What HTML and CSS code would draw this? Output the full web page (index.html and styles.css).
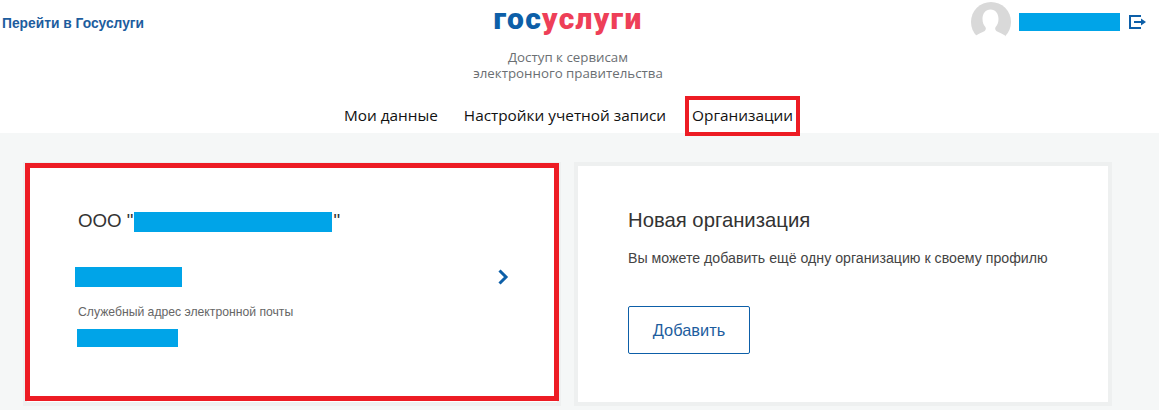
FILE: index.html
```html
<!DOCTYPE html>
<html lang="ru">
<head>
<meta charset="utf-8">
<title>Госуслуги — Организации</title>
<link rel="stylesheet" href="styles.css">
</head>
<body>
<header class="header">
  <div class="top">
    <a class="back" href="#">Перейти в Госуслуги</a>
    <div class="brand">
      <div class="logo"><span class="logo-a">гос</span><span class="logo-b">услуги</span></div>
      <p class="tagline">Доступ к сервисам<br>электронного правительства</p>
    </div>
    <div class="user">
      <svg class="avatar" viewBox="0 0 40 40" width="40" height="40">
        <circle cx="20" cy="20" r="20" fill="#d9d9d9"/>
        <path d="M19.500 7.500c-5 0-8 4-8 9.500 0 3 1 6 2.800 8 .9 1 .7 3-.6 4-2.200 1.500-6 2.500-8.700 4.500V42h29V33.500c-2.700-2-6.500-3-8.700-4.500-1.300-1-1.500-3-.6-4 1.800-2 2.800-5 2.800-8 0-5.500-3-9.500-8-9.500z" fill="#fff"/>
      </svg>
      <span class="mask mask-user"></span>
      <svg class="exit" viewBox="0 0 17 14" width="17" height="14">
        <path d="M12 1H1v12h11" fill="none" stroke="#0d5fa8" stroke-width="2"/>
        <path d="M5 7h8" fill="none" stroke="#0d5fa8" stroke-width="2"/>
        <path d="M12 3.500L17 7l-5 3.500z" fill="#0d5fa8"/>
      </svg>
    </div>
  </div>
  <nav class="nav">
    <a class="tab" href="#">Мои данные</a>
    <a class="tab" href="#">Настройки учетной записи</a>
    <a class="tab tab-active" href="#">Организации</a>
  </nav>
</header>
<main class="main">
  <section class="card card-org">
    <h2 class="org-title">ООО "<span class="mask mask-org"></span>"</h2>
    <div class="org-row">
      <div class="org-info">
        <span class="mask mask-name"></span>
        <p class="label">Служебный адрес электронной почты</p>
        <span class="mask mask-mail"></span>
      </div>
      <svg class="chevron" viewBox="0 0 12 16" width="12" height="16">
        <path d="M2.500 1.500L9 8l-6.500 6.500" fill="none" stroke="#0d5fa8" stroke-width="3"/>
      </svg>
    </div>
  </section>
  <section class="card card-new">
    <h2 class="new-title">Новая организация</h2>
    <p class="new-text">Вы можете добавить ещё одну организацию к своему профилю</p>
    <a class="btn" href="#">Добавить</a>
  </section>
</main>
</body>
</html>
```

FILE: styles.css
```css
* { box-sizing: border-box; }
html, body { margin: 0; height: 100%; }
body {
  background: #f5f7f7;
  font-family: "Liberation Sans", Arial, sans-serif;
  overflow: hidden;
}
a { text-decoration: none; }
.header { background: #fff; height: 133px; }
.top {
  display: grid;
  grid-template-columns: 418px 300px 1fr;
  height: 96px;
}
.back {
  margin: 16px 0 0 2px;
  font-size: 13.8px;
  font-weight: 700;
  line-height: 15px;
  color: #1d5d9e;
}
.brand { text-align: center; }
.logo {
  font-family: Roboto, sans-serif;
  font-weight: 900;
  font-size: 30px;
  letter-spacing: 1.3px;
  line-height: 34px;
  height: 44px;
  margin-top: 2px;
}
.logo-a { color: #0d5fa8; }
.logo-b { color: #ee3f58; }
.tagline {
  margin: 3px 0 0;
  font-family: "Open Sans", sans-serif;
  font-size: 13.3px;
  line-height: 16px;
  color: #6b6f73;
}
.user {
  display: flex;
  align-items: flex-start;
  justify-content: flex-end;
  padding: 2px 13px 0 0;
}
.avatar { flex: none; margin-right: 8px; }
.mask { display: inline-block; background: #00a4e8; }
.mask-user { width: 101px; height: 18px; margin-top: 11px; margin-right: 9px; }
.exit { margin-top: 13px; }
.nav {
  display: flex;
  justify-content: center;
  align-items: stretch;
  height: 40px;
  font-family: "Open Sans", sans-serif;
  font-size: 15.35px;
  padding-right: 22px;
}
.tab {
  display: flex;
  align-items: center;
  color: #111;
  padding: 0 3px 2px;
  margin-right: 12px;
  border: 4px solid transparent;
}
.tab-active { border-color: #ed1c24; margin-right: 0; }
.main {
  display: grid;
  grid-template-columns: 538px 538px;
  column-gap: 13px;
  padding: 29px 0 0 23px;
}
.card {
  position: relative;
  background: #fff;
  border: 4px solid #eef0f0;
  height: 244px;
}
.card-org { padding: 44px 48px 0 51px; }
.card-org::after {
  content: "";
  position: absolute;
  top: -3px;
  left: -2px;
  right: -2px;
  bottom: 1px;
  border: 5px solid #ed1c24;
}
.org-title {
  margin: 0;
  font-size: 18.7px;
  font-weight: 400;
  line-height: 22px;
  color: #333;
}
.mask-org { width: 198px; height: 20px; margin: 0 1px 0 1px; vertical-align: -5px; }
.org-row { display: flex; align-items: flex-start; justify-content: space-between; margin-top: 35px; }
.org-info { display: flex; flex-direction: column; align-items: flex-start; }
.mask-name { width: 107px; height: 20px; margin-left: -3px; }
.label { margin: 18px 0 10px; font-size: 12.2px; line-height: 14px; color: #666; }
.mask-mail { width: 101px; height: 18px; margin-left: -1px; }
.chevron { margin-top: 2px; }
.card-new { padding: 43px 50px 0; }
.new-title {
  margin: 0;
  font-size: 20.3px;
  font-weight: 400;
  line-height: 22px;
  color: #333;
}
.new-text { margin: 19px 0 0; font-size: 14.18px; line-height: 16px; color: #444; }
.btn {
  display: flex;
  width: 122px;
  height: 48px;
  margin-top: 40px;
  align-items: center;
  justify-content: center;
  border: 1px solid #0d5fa8;
  border-radius: 2px;
  font-size: 16.4px;
  color: #1d5d9e;
}
```
